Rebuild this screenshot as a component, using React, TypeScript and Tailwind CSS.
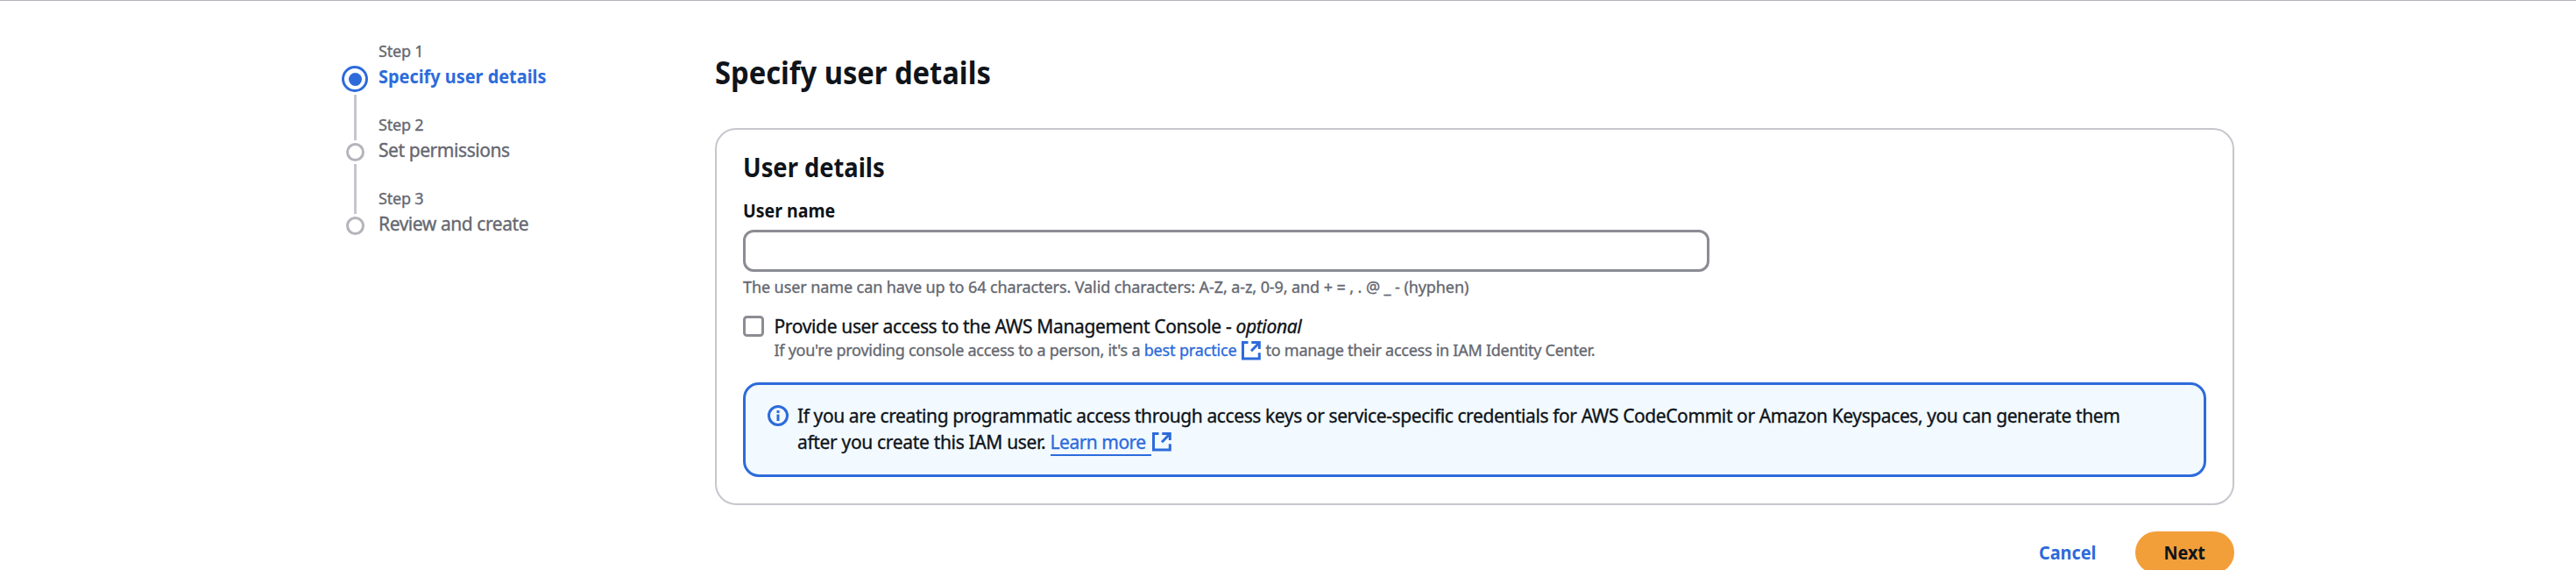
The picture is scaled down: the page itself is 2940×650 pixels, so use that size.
import type { ReactNode } from "react";

type Step = { label: string; title: string; active?: boolean };

const steps: Step[] = [
  { label: "Step 1", title: "Specify user details", active: true },
  { label: "Step 2", title: "Set permissions" },
  { label: "Step 3", title: "Review and create" },
];

function ExternalIcon({ className }: { className: string }) {
  return (
    <svg
      viewBox="0 0 22 22"
      fill="none"
      stroke="#2d6bdb"
      strokeWidth="3"
      className={"h-[22px] w-[22px] shrink-0 " + className}
    >
      <path d="M7.5 1.5H1.5V20H20.3V13.2" />
      <path d="M11.3 1.5H20.3V9" />
      <path d="M11 11.3L20 2" />
    </svg>
  );
}

function InfoIcon() {
  return (
    <svg viewBox="0 0 24 24" fill="none" stroke="#2d6bdb" strokeWidth="3" className="mt-[3px] h-6 w-6 shrink-0">
      <circle cx="12" cy="12" r="10.5" />
      <path d="M12 6v3M12 10.5V18" />
    </svg>
  );
}

function StepNav() {
  return (
    <nav className="mt-[45px] flex w-[426px] shrink-0 gap-3">
      <div className="mt-[29px] flex w-[30px] flex-col gap-[3px]">
        <div className="flex h-[30px] w-[30px] items-center justify-center rounded-full border-3 border-[#2d6bdb]">
          <div className="h-[15px] w-[15px] rounded-full bg-[#2d6bdb]" />
        </div>
        <div className="ml-[14px] h-[52px] w-[3px] bg-[#c6c6cd]" />
        <div className="ml-[5px] h-[21px] w-[21px] rounded-full border-3 border-[#b4b4bb]" />
        <div className="ml-[14px] h-[57px] w-[3px] bg-[#c6c6cd]" />
        <div className="ml-[5px] h-[21px] w-[21px] rounded-full border-3 border-[#b4b4bb]" />
      </div>
      <ol className="flex flex-col gap-7 whitespace-nowrap text-[#656871]">
        {steps.map((step) => (
          <li key={step.label} className="flex h-14 flex-col gap-[2px]">
            <span className="text-[18px] leading-6 tracking-[-0.2px] [-webkit-text-stroke:0.35px]">{step.label}</span>
            {step.active ? (
              <span className="origin-left scale-x-[0.947] text-[21px] leading-[30px] font-bold text-[#2d6bdb]">
                {step.title}
              </span>
            ) : (
              <span className="text-[21px] leading-[30px] tracking-[-0.43px] [-webkit-text-stroke:0.35px]">
                {step.title}
              </span>
            )}
          </li>
        ))}
      </ol>
    </nav>
  );
}

function Alert({ children }: { children: ReactNode }) {
  return (
    <div className="mt-[25px] flex h-[108px] gap-[10px] rounded-[18px] border-3 border-[#2d6bdb] bg-[#f2faff] pt-5 pl-[25px]">
      <InfoIcon />
      <div className="text-[21px] leading-[30px] whitespace-nowrap [-webkit-text-stroke:0.35px]">{children}</div>
    </div>
  );
}

export default function App() {
  return (
    <div className="h-[650px] w-[2940px] overflow-hidden border-t border-[#b4b4bb] bg-white pl-[390px] font-['Noto_Sans',sans-serif] text-[#0f141a]">
      <div className="flex">
        <StepNav />
        <main className="w-[1734px] pt-[59px]">
          <h1 className="w-max origin-left scale-x-[0.908] text-[36px] leading-[45px] font-bold">
            Specify user details
          </h1>

          <section className="mt-[41px] h-[430px] rounded-[24px] border-2 border-[#c6c6cd] px-[30px] pt-[25px]">
            <h2 className="w-max origin-left scale-x-[0.91] text-[30px] leading-9 font-bold">User details</h2>

            <label
              htmlFor="username"
              className="mt-4 block w-max origin-left scale-x-[0.93] text-[21px] leading-[30px] font-bold"
            >
              User name
            </label>
            <input
              id="username"
              type="text"
              className="mt-[7px] block h-12 w-[1103px] rounded-[12px] border-3 border-[#8c8c94] bg-white"
            />
            <p className="mt-[5px] text-[18px] leading-6 tracking-[-0.09px] whitespace-nowrap text-[#656871] [-webkit-text-stroke:0.35px]">
              The user name can have up to 64 characters. Valid characters: A-Z, a-z, 0-9, and + = , . @ _ - (hyphen)
            </p>

            <div className="mt-[18px] flex gap-[11.5px] whitespace-nowrap [-webkit-text-stroke:0.35px]">
              <span className="mt-[3px] h-6 w-6 rounded-[4.5px] border-3 border-[#8c8c94]" />
              <div>
                <p className="text-[21px] leading-[30px] tracking-[-0.35px]">
                  Provide user access to the AWS Management Console - <i>optional</i>
                </p>
                <p className="flex text-[18px] leading-6 tracking-[-0.26px] text-[#656871]">
                  <span className="whitespace-pre">{"If you're providing console access to a person, it's a "}</span>
                  <a className="tracking-[-0.15px] text-[#2d6bdb]">best practice</a>
                  <ExternalIcon className="mt-[2px] mr-[6px] ml-[5px]" />
                  <span>to manage their access in IAM Identity Center.</span>
                </p>
              </div>
            </div>

            <Alert>
              <p className="tracking-[-0.405px]">
                If you are creating programmatic access through access keys or service-specific credentials for AWS
                CodeCommit or Amazon Keyspaces, you can generate them
              </p>
              <p className="flex tracking-[-0.33px]">
                <span className="whitespace-pre">{"after you create this IAM user. "}</span>
                <a className="h-[31px] w-[115px] border-b-2 border-[#2d6bdb] tracking-[-0.5px] text-[#2d6bdb]">
                  Learn more
                </a>
                <ExternalIcon className="mt-1 ml-[1px]" />
              </p>
            </Alert>
          </section>

          <div className="mt-[30px] flex h-12 justify-end gap-[45px] text-[21px] font-bold">
            <button className="h-12 w-[67px] leading-[45px] text-[#2d6bdb]">
              <span className="inline-block scale-x-[0.945]">Cancel</span>
            </button>
            <button className="h-12 w-[113px] rounded-full bg-[#f29f3a] leading-[45px]">
              <span className="inline-block scale-x-[0.94]">Next</span>
            </button>
          </div>
        </main>
      </div>
    </div>
  );
}
